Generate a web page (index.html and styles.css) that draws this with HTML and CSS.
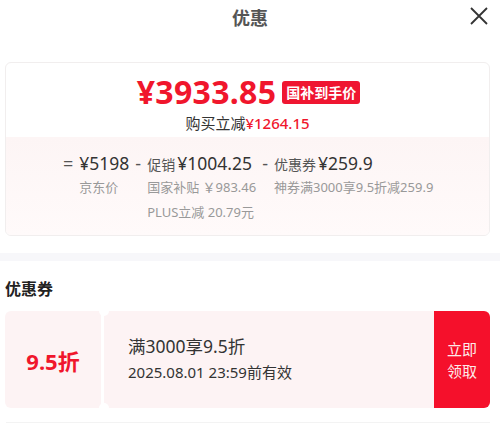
FILE: index.html
```html
<!DOCTYPE html>
<html lang="zh-CN">
<head>
    <meta charset="UTF-8">
    <meta name="viewport" content="width=device-width, initial-scale=1.0">
    <title>优惠</title>
    <link rel="stylesheet" href="styles.css">
</head>
<body>

<div class="header">
    <h2>优惠</h2>
    <span class="close">
        <svg width="20" height="20" viewBox="0 0 20 20"><path d="M2 2L18 18M18 2L2 18" stroke="#333" stroke-width="1.8" fill="none"/></svg>
    </span>
</div>

<div class="wrap">
    <div class="price-card">
        <div class="price-top">
            <div class="final">
                <span class="final-price">¥3933.85</span>
                <span class="badge">国补到手价</span>
            </div>
            <div class="save">购买立减<span class="red">¥1264.15</span></div>
        </div>
        <div class="breakdown">
            <span class="op">=</span>
            <div class="col">
                <div class="main"><span class="num">¥5198</span></div>
                <div class="sub">京东价</div>
            </div>
            <span class="op">-</span>
            <div class="col">
                <div class="main"><span class="label">促销</span><span class="num">¥1004.25</span></div>
                <div class="sub">国家补贴 ￥983.46</div>
                <div class="sub">PLUS立减 20.79元</div>
            </div>
            <span class="op">-</span>
            <div class="col">
                <div class="main"><span class="label">优惠券</span><span class="num">¥259.9</span></div>
                <div class="sub">神券满3000享9.5折减259.9</div>
            </div>
        </div>
    </div>
</div>

<div class="band"></div>

<div class="wrap">
    <h3>优惠券</h3>
    <div class="coupon">
        <div class="coupon-left">9.5折</div>
        <div class="coupon-info">
            <div class="cond">满3000享9.5折</div>
            <div class="time">2025.08.01 23:59前有效</div>
        </div>
        <button class="take">立即<br>领取</button>
        <span class="notch top"></span>
        <span class="notch bottom"></span>
    </div>
    <div class="line"></div>
</div>

</body>
</html>
```

FILE: styles.css
```css
body {
    font-family: "Noto Sans", "Noto Sans CJK SC", sans-serif;
    background: #fff;
    margin: 0;
    color: #333;
}
.header {
    position: relative;
    height: 40px;
    display: flex;
    justify-content: center;
    align-items: center;
}
.header h2 {
    margin: 0;
    font-size: 18px;
    font-weight: bold;
    color: #555;
    position: relative;
    top: -3px;
}
.close {
    position: absolute;
    right: 11px;
    top: 6px;
    line-height: 0;
}
.wrap {
    padding: 0 10px 0 5px;
}
.price-card {
    margin-top: 22px;
    border: 1px solid #f1eeee;
    border-radius: 6px;
    overflow: hidden;
}
.price-top {
    padding: 10px 0 4px;
    text-align: center;
}
.final {
    display: flex;
    justify-content: center;
    align-items: center;
    gap: 6px;
    padding-left: 2px;
    height: 36px;
}
.final-price {
    color: #f0162c;
    font-size: 32px;
    font-weight: bold;
    letter-spacing: 0.3px;
}
.badge {
    background: #ef1631;
    color: #fff;
    font-size: 14px;
    font-weight: bold;
    padding: 1px 4px;
    border-radius: 3px;
    line-height: 21px;
    position: relative;
    top: 1px;
}
.save {
    font-size: 15px;
    color: #333;
    margin-top: 3px;
}
.red {
    color: #f0162c;
    font-weight: 500;
}
.breakdown {
    background: linear-gradient(#fdf5f5, #fffafa);
    display: flex;
    align-items: flex-start;
    padding: 14px 0 10px 57px;
    gap: 6px;
}
.op {
    font-size: 18px;
    color: #555;
    line-height: 24px;
}
.col {
    display: flex;
    flex-direction: column;
}
.main {
    display: flex;
    align-items: baseline;
    gap: 2px;
    height: 24px;
    line-height: 24px;
}
.num {
    font-size: 17.5px;
    color: #333;
}
.label {
    font-size: 14px;
    color: #555;
}
.sub {
    font-size: 13px;
    color: #999;
    line-height: 25px;
}
.band {
    height: 8px;
    background: #f7f7fa;
    margin-top: 17px;
}
h3 {
    margin: 15px 0 11px;
    font-size: 16px;
    font-weight: bold;
    color: #222;
}
.coupon {
    position: relative;
    display: flex;
    height: 97px;
    gap: 3px;
}
.coupon-left {
    width: 96px;
    background: #fdf3f4;
    border-radius: 6px 0 0 6px;
    display: flex;
    align-items: center;
    justify-content: center;
    color: #f0162c;
    font-size: 22px;
    font-weight: bold;
}
.coupon-info {
    flex: 1;
    background: #fdf3f4;
    padding: 22px 0 0 24px;
}
.cond {
    font-size: 17.5px;
    color: #333;
    line-height: 26px;
}
.time {
    font-size: 15px;
    color: #333;
    line-height: 26px;
}
.take {
    width: 56px;
    margin-left: -3px;
    border: none;
    background: #f5102b;
    color: #fdeaea;
    font-family: "Noto Sans CJK SC", sans-serif;
    font-size: 15px;
    line-height: 22px;
    border-radius: 0 6px 6px 0;
    padding: 0;
}
.notch {
    position: absolute;
    left: 94px;
    width: 10px;
    height: 10px;
    border-radius: 50%;
    background: #fff;
}
.notch.top {
    top: -5px;
}
.notch.bottom {
    bottom: -5px;
}
.line {
    height: 1px;
    background: #f3f3f3;
    margin-top: 14px;
    margin-left: 1px;
}
```
